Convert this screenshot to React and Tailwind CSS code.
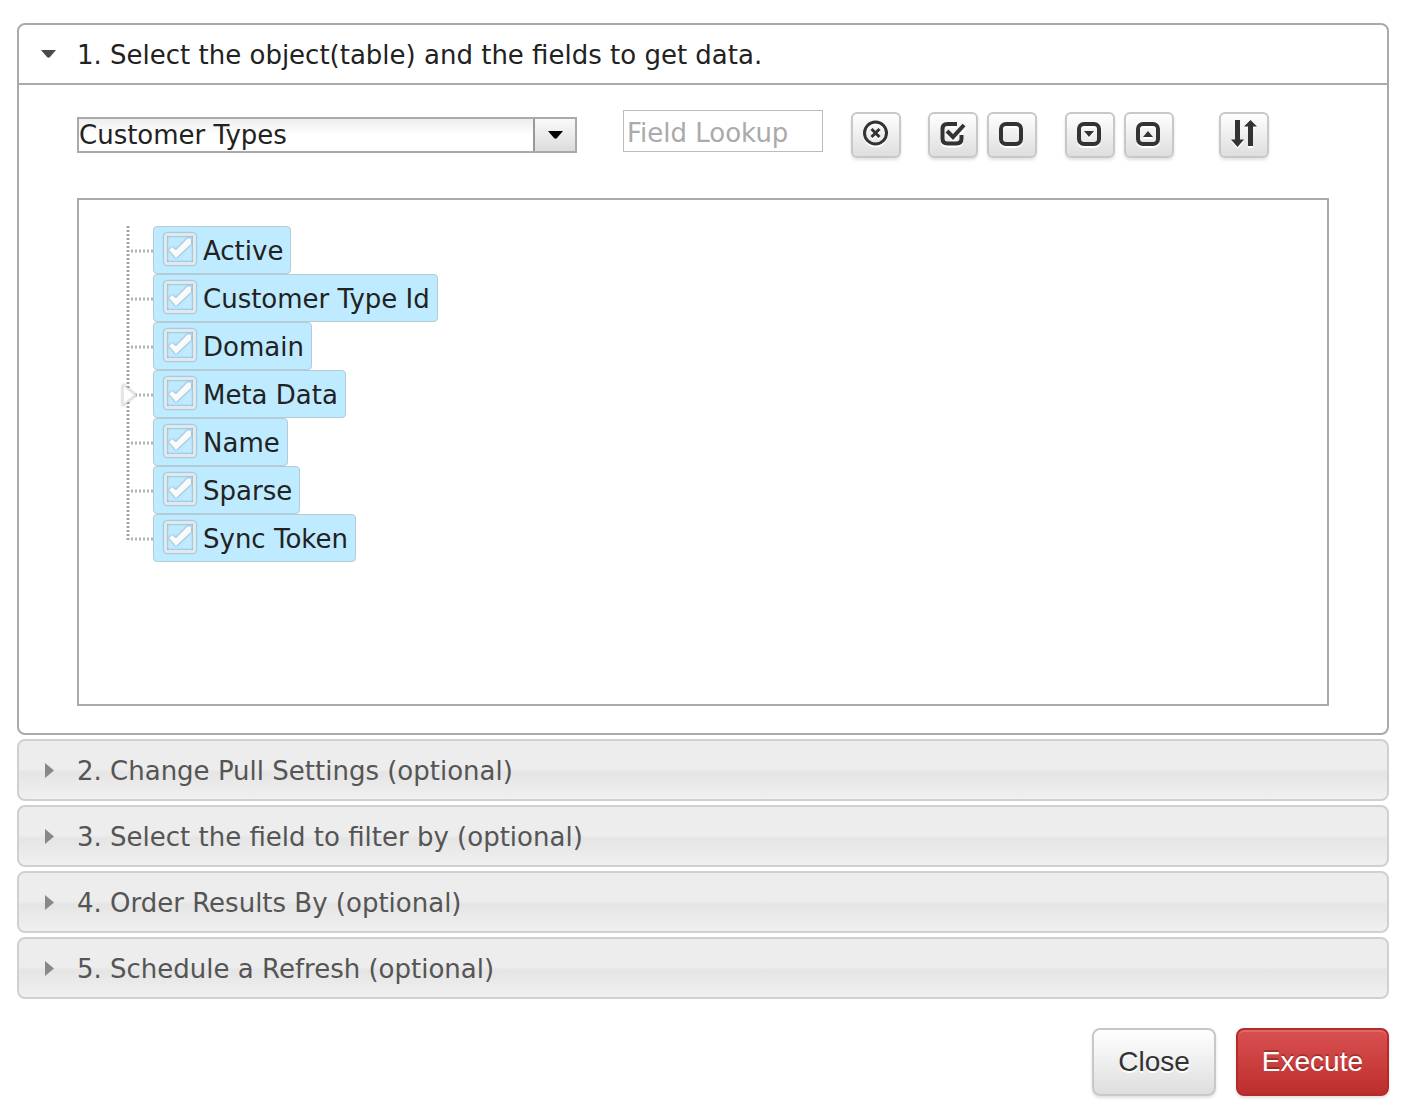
import { useState } from "react";

const FIELDS = [
  { name: "Active" },
  { name: "Customer Type Id" },
  { name: "Domain" },
  { name: "Meta Data", expandable: true },
  { name: "Name" },
  { name: "Sparse" },
  { name: "Sync Token" },
];

const SECTIONS = [
  "2. Change Pull Settings (optional)",
  "3. Select the field to filter by (optional)",
  "4. Order Results By (optional)",
  "5. Schedule a Refresh (optional)",
];

const CheckGlyph = ({ checked }) => (
  <svg
    viewBox="0 0 34 34"
    className="pointer-events-none [grid-area:1/1] size-[34px] drop-shadow-[0_0_1px_rgba(60,80,95,0.6)]"
    fill="none"
    aria-hidden="true"
  >
    <rect x="2.500" y="1.500" width="29" height="29" rx="2" stroke="#e2e8eb" strokeWidth="3" />
    {checked && <path d="M6 17l3-3 4 3L25 5l3 1v5L13 25z" fill="#fafafa" />}
  </svg>
);

const TreeRow = ({ field, last }) => {
  const [checked, setChecked] = useState(true);

  return (
    <li className="flex h-12">
      <div className="relative w-[33px] shrink-0">
        <svg className="h-12 w-[33px]" viewBox="0 0 33 48" aria-hidden="true">
          <path
            d={last ? "M8 0V26" : "M8 0V48"}
            stroke="#a3a3a3"
            strokeWidth="3"
            strokeDasharray="2 2"
          />
          <path d="M33 25H9" stroke="#b4b4b4" strokeWidth="3" strokeDasharray="2 2" />
        </svg>
        {field.expandable && (
          <button type="button" aria-label={"Expand " + field.name} className="absolute top-3 left-0">
            <svg
              className="h-[26px] w-5 drop-shadow-[0_0_1px_rgba(0,0,0,0.3)]"
              viewBox="0 0 20 26"
              aria-hidden="true"
            >
              <path d="M3 3L15 13L3 23z" fill="#fff" stroke="#e6e6e6" strokeWidth="2" strokeLinejoin="round" />
            </svg>
          </button>
        )}
      </div>
      <label className="flex items-center rounded-[4px] border border-[#b3ccd7] bg-[#beebff] pr-[7px] pl-[9px] text-[#222]">
        <span className="mr-[6px] grid">
          <input
            type="checkbox"
            checked={checked}
            onChange={() => setChecked(!checked)}
            className="[grid-area:1/1] size-[34px] appearance-none"
          />
          <CheckGlyph checked={checked} />
        </span>
        <span className="pt-[2px]">{field.name}</span>
      </label>
    </li>
  );
};

const ToolButton = ({ label, className = "", children }) => (
  <button
    type="button"
    aria-label={label}
    className={
      "flex h-[46px] w-[50px] shrink-0 items-center justify-center rounded-md border-2 border-[#c8c8c8] bg-linear-to-b from-white to-[#dedede] pb-[2px] shadow-[0_2px_3px_rgba(0,0,0,0.12)] " +
      className
    }
  >
    <svg
      className="size-7 drop-shadow-[0_2px_0_#fff]"
      viewBox="0 0 28 28"
      fill="none"
      stroke="#333"
      aria-hidden="true"
    >
      {children}
    </svg>
  </button>
);

const App = () => {
  const [table, setTable] = useState("Customer Types");
  const [lookup, setLookup] = useState("");

  return (
    <div className="bg-white pt-[23px] pr-[19px] pb-[14px] pl-[17px] font-['DejaVu_Sans',Verdana,sans-serif] text-[26px] leading-8">
      <div className="flex flex-col gap-1">
        <section className="rounded-lg border-2 border-[#aaa]">
          <h3 className="border-b-2 border-[#aaa]">
            <button type="button" className="flex h-[58px] w-full items-center pl-[22px] text-left text-[#222]">
              <svg className="mr-[21px] h-2 w-[15px]" viewBox="0 0 15 8" aria-hidden="true">
                <path d="M0 0H15L9 7Q7.500 8.500 6 7z" fill="#4a4a4a" />
              </svg>
              <span className="pt-[2px]">1. Select the object(table) and the fields to get data.</span>
            </button>
          </h3>

          <div className="px-[58px] pt-[25px] pb-[27px]">
            <div className="flex h-[50px] items-center">
              <div className="relative flex w-[500px]">
                <select
                  aria-label="Object"
                  value={table}
                  onChange={(e) => setTable(e.target.value)}
                  className="h-9 w-full appearance-none border-2 border-[#aaa] bg-linear-to-b from-[#eee] to-white to-50% text-[#222]"
                >
                  <option>Customer Types</option>
                  <option>Customers</option>
                </select>
                <span className="pointer-events-none absolute top-[2px] right-[2px] flex h-8 w-[42px] items-center justify-center border-l-2 border-[#999] bg-linear-to-b from-[#fafafa] to-[#dcdcdc]">
                  <svg className="h-2 w-[15px]" viewBox="0 0 15 8" aria-hidden="true">
                    <path d="M0 0H15L9 7Q7.500 8.500 6 7z" fill="#000" />
                  </svg>
                </span>
              </div>
              <input
                type="text"
                aria-label="Field Lookup"
                placeholder="Field Lookup"
                value={lookup}
                onChange={(e) => setLookup(e.target.value)}
                className="ml-[46px] h-[42px] w-[200px] self-start border border-[#bbb] px-[3px] pt-[3px] text-[#222] placeholder:text-[#aaa]"
              />

              <ToolButton label="Clear lookup" className="ml-7">
                <circle cx="13.500" cy="13" r="11" strokeWidth="3" />
                <path d="M9.500 9l8 8M17.500 9l-8 8" strokeWidth="3" />
              </ToolButton>
              <ToolButton label="Select all" className="ml-[27px]">
                <path
                  d="M18 4H8.500Q3.500 4 3.500 9V18.500Q3.500 23.500 8.500 23.500H17.500Q22.500 23.500 22.500 18.500V15"
                  strokeWidth="4"
                />
                <path d="M13 17L26 4" stroke="#f4f4f4" strokeWidth="7" />
                <path d="M8 11l6 6L25 5" strokeWidth="4" />
              </ToolButton>
              <ToolButton label="Deselect all" className="ml-[9px]">
                <rect x="3" y="4" width="20" height="20" rx="5" strokeWidth="4" />
              </ToolButton>
              <ToolButton label="Expand all" className="ml-7">
                <rect x="3" y="4" width="20" height="20" rx="5" strokeWidth="4" />
                <path d="M8 11H18L13 17z" fill="#333" stroke="none" />
              </ToolButton>
              <ToolButton label="Collapse all" className="ml-[9px]">
                <rect x="3" y="4" width="20" height="20" rx="5" strokeWidth="4" />
                <path d="M8 17H18L13 11z" fill="#333" stroke="none" />
              </ToolButton>
              <ToolButton label="Sort fields" className="ml-[45px]">
                <path d="M7.500 0V21M20.500 5V26" strokeWidth="5" />
                <path d="M1 19.500H14L7.500 27zM14 6.500H27L20.500 0z" fill="#333" stroke="none" />
              </ToolButton>
            </div>

            <ul className="mt-[38px] min-h-[508px] border-2 border-[#aaa] pt-[26px] pl-[41px]">
              {FIELDS.map((field, i) => (
                <TreeRow key={field.name} field={field} last={i === FIELDS.length - 1} />
              ))}
            </ul>
          </div>
        </section>

        {SECTIONS.map((title) => (
          <h3 key={title}>
            <button
              type="button"
              className="flex h-[62px] w-full items-center rounded-lg border-2 border-[#d0d0d0] bg-linear-to-b from-[#ededed] from-48% via-[#e5e5e5] via-54% to-[#f0f0f0] pl-[26px] text-left text-[#555]"
            >
              <svg className="mr-[23px] h-[15px] w-[9px]" viewBox="0 0 9 15" aria-hidden="true">
                <path d="M0 0L9 7.500L0 15z" fill="#888" />
              </svg>
              <span className="pt-[2px]">{title}</span>
            </button>
          </h3>
        ))}
      </div>

      <div className="mt-[29px] flex justify-end gap-5 font-['Liberation_Sans',Arial,sans-serif] text-[28px]">
        <button
          type="button"
          className="h-[68px] rounded-lg border-2 border-[#c8c8c8] bg-linear-to-b from-white to-[#dedede] px-6 text-[#333] shadow-[0_2px_3px_rgba(0,0,0,0.12)] text-shadow-[0_2px_0_#fff]"
        >
          Close
        </button>
        <button
          type="button"
          className="h-[68px] rounded-lg border-2 border-[#b52b2b] bg-linear-to-b from-[#d95050] to-[#bd2d2d] px-6 text-white shadow-[0_2px_3px_rgba(0,0,0,0.12),inset_0_2px_0_rgba(255,255,255,0.15)] text-shadow-[0_-2px_0_rgba(0,0,0,0.25)]"
        >
          Execute
        </button>
      </div>
    </div>
  );
};

export default App;
